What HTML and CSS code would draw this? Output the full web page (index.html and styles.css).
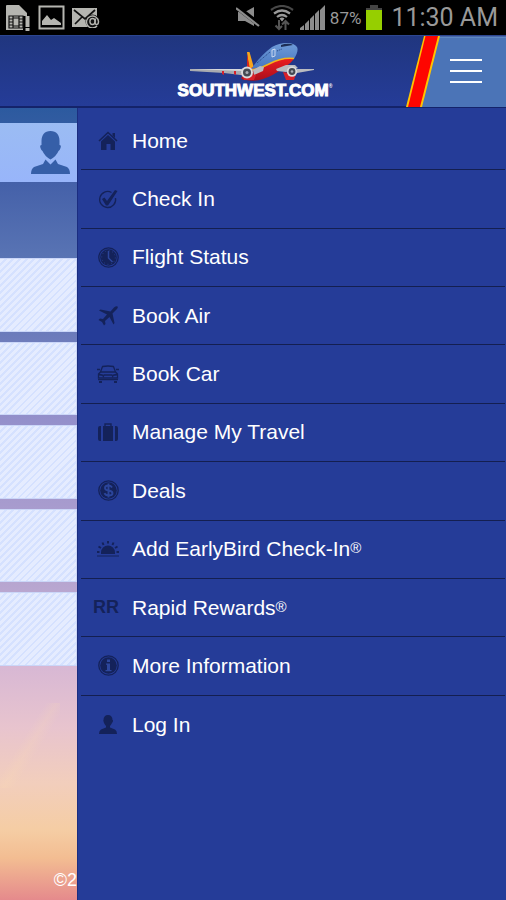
FILE: index.html
```
<!DOCTYPE html>
<html lang="en">
<head>
<meta charset="utf-8">
<meta name="viewport" content="width=device-width, initial-scale=1">
<title>Southwest.com</title>
<link rel="stylesheet" href="styles.css">
</head>
<body>
<div class="status">
  <div class="status-group notices">
    <svg width="26" height="30" viewBox="0 0 26 30"><path fill="#b5b5b0" d="M1 3Q1 2 2 2H14L22 10V13H18V27H1z"/><path fill="#b5b5b0" d="M20.500 13h4v11h-4zM20.500 25h4v3h-4z"/><path fill="none" stroke="#111" stroke-width="1.200" d="M4 13h14v12H4zM8 13v12M14 13v12M4 16h4M4 19h4M4 22h4M14 16h4M14 19h4M14 22h4M8 15h6M8 23h6"/></svg>
    <svg width="27" height="25" viewBox="0 0 27 25"><path fill="none" stroke="#b5b5b0" stroke-width="2" d="M1.500 1.500h24v22h-24z"/><path fill="#b5b5b0" d="M4 20V16l5-6 4 5 3-2 7 5v2z"/></svg>
    <svg width="28" height="20" viewBox="0 0 28 20"><path fill="#b5b5b0" d="M0 0h25v19H0z"/><path fill="none" stroke="#111" stroke-width="1.700" d="M2 2l11 9L23 2M3 16l7-7"/><circle cx="20.500" cy="13.500" r="7" fill="#111"/><path fill="none" stroke="#b5b5b0" stroke-width="1.400" d="M25 18a6 6 0 1 1 1.500-4.500c0 4-3.500 3.500-3.500 1l.5-4"/><ellipse cx="20.500" cy="13.500" rx="2.600" ry="3" fill="none" stroke="#b5b5b0" stroke-width="1.400"/></svg>
  </div>
  <div class="status-group system">
    <svg width="24" height="22" viewBox="0 0 24 22"><path fill="#8c8c8c" d="M2 5h7l9-5v19l-9-5H2z"/><path stroke="#000" stroke-width="5" d="M2 1l22 17"/><path stroke="#8c8c8c" stroke-width="2.200" d="M0 1l23 18"/></svg>
    <svg width="24" height="26" viewBox="0 0 24 26"><g fill="none" stroke="#777" stroke-width="2.200"><path d="M1 5q11-8 22 0" stroke="#484848"/><path d="M4 8.500q8-6 16 0M7 12q5-4 10 0" stroke="#999"/></g><path fill="#999" d="M9.500 13.500q2.500-2 5 0L12 16.500z"/><path fill="none" stroke="#555" stroke-width="2" d="M9 15v9M5.500 20.500L9 24l3-3M15.500 25v-9M12 19.500l3.500-3.500 3.500 3.500"/></svg>
    <svg width="26" height="26" viewBox="0 0 26 26"><path fill="#8c8c8c" d="M0 25v-2l4-3v5zM5 25v-6l4-4v10zM10 25V14l4-4v15zM15 25V9l4-4v20zM20 25V5l5-5v25z"/></svg>
    <span class="percent">87%</span>
    <svg class="battery" width="18" height="25" viewBox="0 0 18 25"><path fill="#444" d="M5 0h8v3h4v3H1V3h4z"/><path fill="#96cf00" d="M1 5h16v20H1z"/></svg>
    <time class="clock">11:30 AM</time>
  </div>
</div>

<header class="header">
  <a class="brand" href="#">
    <svg class="plane" width="126" height="38" viewBox="0 0 126 38" aria-hidden="true">
      <defs>
        <linearGradient id="hull" x1="0" y1="0" x2="0" y2="1"><stop offset="0" stop-color="#6f9bd8"/><stop offset="1" stop-color="#4676c0"/></linearGradient>
        <linearGradient id="belly" x1="0" y1="0" x2="0" y2="1"><stop offset="0" stop-color="#ee1d20"/><stop offset="1" stop-color="#a80f1c"/></linearGradient>
      </defs>
      <path fill="#f8a51b" d="M57 9h2.500l4.500 16h-5z"/><path fill="#d8261c" d="M57 11l0 13 3 2z"/>
      <path fill="#a9abb0" d="M0 26l50 0 12 2-3 5-25-3L0 28z"/>
      <path fill="#d6d8dc" d="M0 26l50 0 8 1-5 1z"/>
      <path fill="#d8202a" d="M32 28h2v4l-2-1zM44 28h2v4l-2-1z"/>
      <path fill="url(#belly)" d="M51 35l10-10q22-11 43-10-1 4-11 10-10 8-20 11-10 3-17 1-4 0-5-2z"/>
      <path fill="url(#hull)" d="M62 25Q70 13 82 4q7-4 15-4 7 0 10 4 2 4-3 12-12-1-21 3-11 6-21 7z"/>
      <path fill="none" stroke="#f4b41c" stroke-width="1.500" d="M61 27q9-1 18-6 13-7 25-5.500"/>
      <path fill="#1d2e55" d="M91 2q5-2 10-1l2 1-6 1-6 1z"/>
      <path fill="none" stroke="#dfe9f7" stroke-width=".8" d="M82 7l3-1v7l-3 1z"/><path fill="none" stroke="#24427f" stroke-width="1" stroke-dasharray="1 1" d="M67 20l13-11M87 8l5-2"/>
      <path fill="#b9bbc0" d="M63 27l7-4 4 1-1 4-9 4zM86 26l10-4 9 0 3 3-12 4-9-1zM107 26l17 0v1l-17 3z"/>
      <path fill="#d8202a" d="M51 30l3 7h10l2-5zM93 29l3 8h8l2-6z"/>
      <circle cx="57" cy="29.500" r="6" fill="#d9dadd"/><circle cx="57" cy="29.500" r="4" fill="#444952"/><circle cx="57" cy="29.500" r="1.500" fill="#a9adb5"/>
      <circle cx="102" cy="28.500" r="5.200" fill="#d9dadd"/><circle cx="102" cy="28.500" r="3.400" fill="#444952"/><circle cx="102" cy="28.500" r="1.300" fill="#a9adb5"/>
    </svg>
    <span class="wordmark">SOUTHWEST.COM<sup>®</sup></span>
  </a>
  <button class="toggle" type="button" aria-label="Menu">
    <svg width="100" height="71" viewBox="0 0 100 71" aria-hidden="true"><path fill="#4b74b7" d="M32 1H100V71H14z"/><path fill="#ffc400" d="M18 0H34L16 71H0z"/><path fill="#fe0500" d="M19.500 0H32L14 71H2z"/><path stroke="#7199d0" d="M34 1h66"/><path stroke="#fff" stroke-width="2" d="M44 24h32M44 35h32M44 46h32"/></svg>
  </button>
</header>

<div class="stage">
  <main class="page">
    <div class="account">
      <svg width="39" height="43" viewBox="0 0 39 43" aria-hidden="true"><path fill="#365fa8" d="M19.500 0C25.500 0 28.500 4 28.500 10v4q2 0 1 3-1 3-2 3-2 5-8 8.500Q13.500 25 11.500 20q-1 0-2-3-1-3 1-3v-4C10.500 4 13.500 0 19.500 0zM14.500 28.500l5 5 5-5 2.500 4.500 9 3q3 2 3 7H0q0-5 3-7l9-3z"/></svg>
    </div>
    <div class="cards">
      <div class="card"></div><div class="card"></div><div class="card"></div><div class="card"></div><div class="card"></div>
    </div>
    <footer class="legal">©2</footer>
  </main>

  <nav class="drawer" aria-label="Main">
    <ul class="menu">
      <li><a href="#"><span class="icon"><svg width="20" height="20" viewBox="0 0 20 20"><path fill="none" stroke="#14225a" stroke-width="1.600" d="M1 10l9-8.500 9 8.500"/><path d="M14.500 2H17v5l-2.500-2.500zM3 10.500l7-6.500 7 6.500V19h-4.500v-6h-4v6H3z"/></svg></span>Home</a></li>
      <li><a href="#"><span class="icon"><svg width="20" height="20" viewBox="0 0 20 20"><path fill="none" stroke="#14225a" stroke-width="1.300" d="M13.500 3.500A8 8 0 1 0 17.500 9"/><path d="M4 10l2.500-1.500L9 12 17 1l2.500 1L10 16.500H8z"/></svg></span>Check In</a></li>
      <li><a href="#"><span class="icon"><svg width="21" height="21" viewBox="0 0 21 21"><circle cx="10.500" cy="10.500" r="9.700" fill="none" stroke="#14225a" stroke-width="1.300"/><circle cx="10.500" cy="10.500" r="8.300"/><circle cx="10.500" cy="10.500" r="6.800" fill="none" stroke="#27408c" stroke-width="1" stroke-dasharray="1 2.560"/><path fill="none" stroke="#2c469c" stroke-width="1.500" d="M10.500 4v7l4 4"/></svg></span>Flight Status</a></li>
      <li><a href="#"><span class="icon"><svg width="20" height="20" viewBox="0 0 20 20"><path d="M19.500.5q1 1-1 3L14.500 7.500l2 9.500-1 1.500L11.500 11 7 15l.5 3L6 19.500 4 16 .5 14 2 12.500l3 .5L9 8.500 1 4.500 2.500 3.500l10 2L16 1.500q2.500-2 3.500-1z"/></svg></span>Book Air</a></li>
      <li><a href="#"><span class="icon"><svg width="22" height="18" viewBox="0 0 22 18"><path fill="none" stroke="#14225a" stroke-width="1.300" d="M3.500 7L5.500 1.500Q11 .5 16.500 1.500L18.500 7zM1.500 13V9l2-2h15l2 2v4zM0 4.500h3M19 4.500h3M6 12l1-2h8l1 2"/><path d="M2 8.500l4 1v1.500l-4-.5zM20 8.500l-4 1v1.500l4-.5zM1 14h20v1.300H1zM2 16h3v2H2zM17 16h3v2h-3z"/></svg></span>Book Car</a></li>
      <li><a href="#"><span class="icon"><svg width="20" height="18" viewBox="0 0 20 18"><path d="M2 3h1v15H2Q0 18 0 16V5q0-2 2-2zM17 3h1q2 0 2 2v11q0 2-2 2h-1zM5 3h10v15H5z"/><path fill="none" stroke="#14225a" stroke-width="1.400" d="M7 3V1h6v2"/></svg></span>Manage My Travel</a></li>
      <li><a href="#"><span class="icon"><svg width="21" height="21" viewBox="0 0 21 21"><circle cx="10.500" cy="10.500" r="9.700" fill="none" stroke="#14225a" stroke-width="1.300"/><circle cx="10.500" cy="10.500" r="8.300"/><path fill="none" stroke="#2b459b" stroke-width="1.900" d="M14 7.500Q13 5.500 10.500 5.500 7 5.500 7 8q0 2 3.500 2.500 4 .5 4 2.700 0 2.300-4 2.300-3 0-4-2.300M10.500 3.500v14"/></svg></span>Deals</a></li>
      <li><a href="#"><span class="icon"><svg width="22" height="16" viewBox="0 0 22 16"><path d="M4 13v-1.500a7 7 0 0 1 14 0V13zM0 14.500h22v1H0z"/><path fill="none" stroke="#14225a" stroke-width="2" d="M11 0v2.500M5.500 1.500l1 2.500M16.500 1.500l-1 2.500M1.500 5.500L4 7M20.500 5.500L18 7M0 11l2.500 0M22 11h-2.500"/></svg></span>Add EarlyBird Check-In<small>®</small></a></li>
      <li><a href="#"><span class="icon rr">RR</span>Rapid Rewards<small>®</small></a></li>
      <li><a href="#"><span class="icon"><svg width="21" height="21" viewBox="0 0 21 21"><circle cx="10.500" cy="10.500" r="9.700" fill="none" stroke="#14225a" stroke-width="1.300"/><circle cx="10.500" cy="10.500" r="8.300"/><path fill="#2d479d" d="M9 4.500h3v2.500H9zM8 8.500h4V15h1.500v1.200H7.500V15H9V9.700H8z"/></svg></span>More Information</a></li>
      <li><a href="#"><span class="icon"><svg width="18" height="19" viewBox="0 0 18 19"><path d="M9 0c3 0 4.500 2 4.500 5 1 0 .5 2-.5 3q-1 2-2 3v1.500l5 2q2 1 2 4.500H0q0-3.500 2-4.500l5-2V11Q6 10 5 8q-1-3-.5-3C4.500 2 6 0 9 0z"/></svg></span>Log In</a></li>
    </ul>
  </nav>
</div>
</body>
</html>
```
FILE: styles.css
```
* {
  box-sizing: border-box;
}

body {
  margin: 0;
  min-height: 100vh;
  display: flex;
  flex-direction: column;
  background: #253c98;
  font-family: "Liberation Sans", Arial, sans-serif;
  color: #fff;
}

svg {
  display: block;
  flex: none;
}

a {
  color: inherit;
  text-decoration: none;
}

/* Phone status bar */
.status {
  height: 35px;
  flex: none;
  display: flex;
  justify-content: space-between;
  padding: 0 8px 0 5px;
  background: #000;
  color: #999;
  font-family: Roboto, sans-serif;
}

.status-group {
  display: flex;
  align-items: center;
}

.notices {
  gap: 7px;
}

.system {
  gap: 4px;
}

.system svg:first-child {
  margin-right: 6px;
}

.system svg:nth-child(2) {
  margin-right: 2px;
}

.percent {
  font-size: 17px;
}

.battery {
  margin-right: 4px;
}

.clock {
  font-size: 25px;
}

/* Brand bar */
.header {
  flex: none;
  display: grid;
  grid-template-columns: 100px 1fr 100px;
  height: 73px;
  border-top: 1px solid #2c4691;
  border-bottom: 2px solid #14236a;
  background: linear-gradient(#20367f, #253c98);
}

.brand {
  grid-column: 2;
  justify-self: center;
  display: flex;
  flex-direction: column;
  align-items: center;
  padding: 7px 0 0 4px;
}

.plane {
  margin-right: 4px;
}

.wordmark {
  font-size: 17px;
  font-weight: 700;
  line-height: 20px;
  -webkit-text-stroke: 1px #fff;
}

.wordmark sup {
  font-size: 5px;
  line-height: 1;
  vertical-align: 8px;
  -webkit-text-stroke: 0;
}

.toggle {
  padding: 0;
  border: 0;
  background: none;
}

/* Page peeking out beside the open drawer */
.stage {
  flex: 1;
  display: grid;
  grid-template-columns: 77px 1fr;
}

.page {
  display: flex;
  flex-direction: column;
  padding-top: 15px;
  overflow: hidden;
  background:
    linear-gradient(122deg, transparent 40%, #ffe0b028 50%, transparent 60%) 0 595px / 60px 85px no-repeat,
    linear-gradient(#2c5a9f 0, #4561a9 76px, #5974b4 150px, #6c7bbb 228px, #9490cb 312px, #a79bce 396px, #b8a6d0 480px, #d8b8d4 560px, #e8c4ce 620px, #f2cebc 675px, #f5cda4 722px, #f3bd92 750px, #e58a8c 792px);
}

.account {
  height: 59px;
  display: flex;
  justify-content: flex-end;
  align-items: center;
  padding-right: 7px;
  background: linear-gradient(#9bbcf3, #98b5fa);
}

.cards {
  height: 408px;
  margin-top: 76px;
  display: grid;
  grid-auto-rows: 1fr;
  gap: 10px;
}

.card {
  border: 1px solid #cad6f8;
  border-width: 1px 1px 1px 0;
  background: repeating-linear-gradient(135deg, #e5ecff 0 3px, #d5e1ff 3px 5px);
}

.legal {
  margin-top: auto;
  padding-bottom: 10px;
  text-align: right;
  font-size: 18px;
  line-height: 20px;
}

/* Drawer */
.drawer {
  padding: 4px 1px 0 3px;
  background: #253c98;
  border-left: 1px solid #1b2d80;
}

.menu {
  height: 642px;
  margin: 0;
  padding: 0;
  display: grid;
  grid-auto-rows: 1fr;
  list-style: none;
}

.menu li {
  border-bottom: 1px solid #141f50;
}

.menu li:last-child {
  border-bottom: 0;
}

.menu a {
  height: 100%;
  display: flex;
  align-items: center;
  padding-left: 12px;
  font-size: 21px;
}

.icon {
  width: 30px;
  margin-right: 9px;
  display: flex;
  justify-content: center;
  fill: #14225a;
}

.rr {
  justify-content: flex-start;
  color: #14225a;
  font-size: 18px;
  font-weight: 700;
}

.menu small {
  font-size: 15px;
  line-height: 18px;
  padding-bottom: 2px;
}
```
